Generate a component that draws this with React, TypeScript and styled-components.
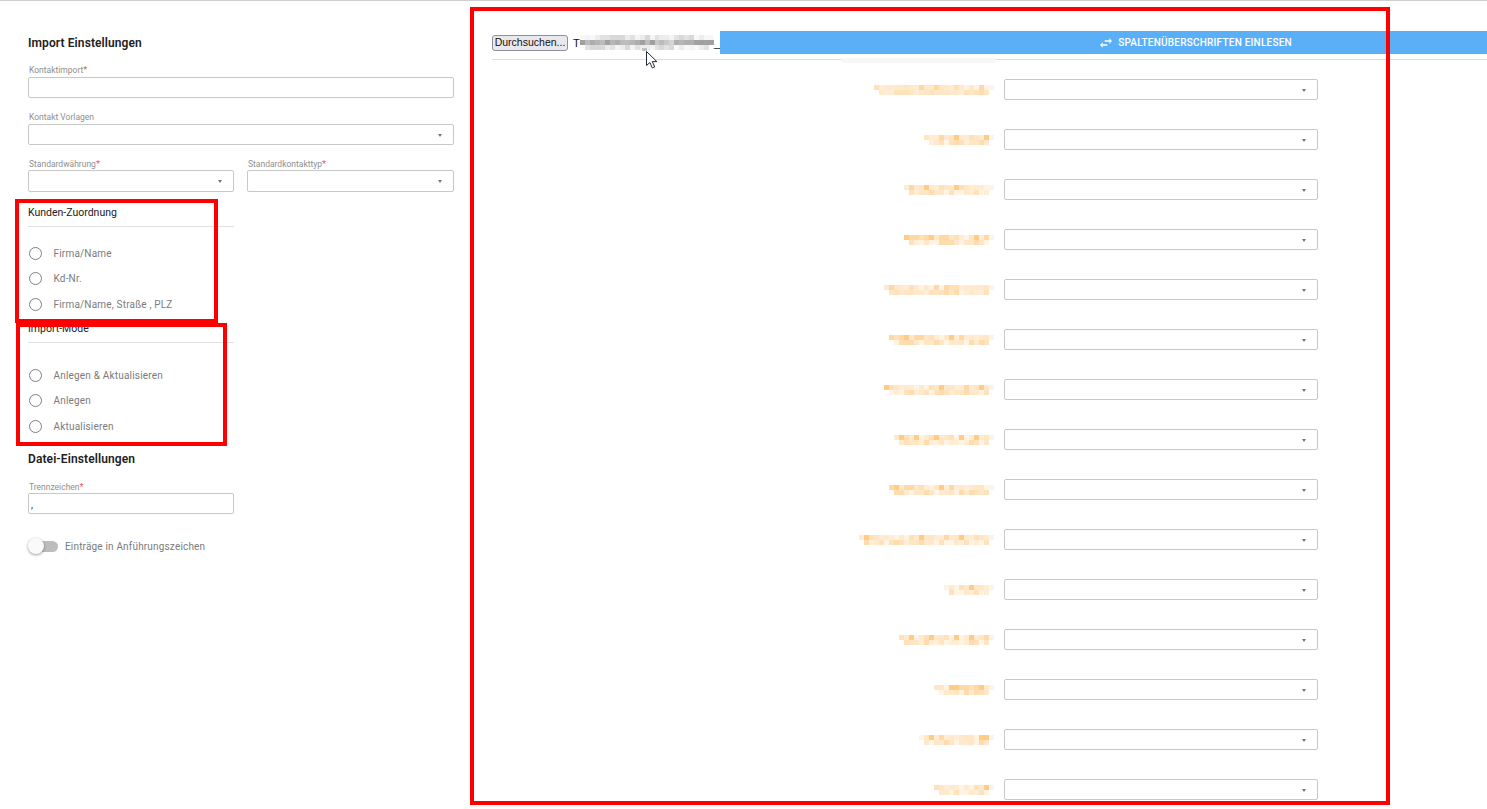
import React from "react";
import styled, { createGlobalStyle } from "styled-components";

const GlobalStyle = createGlobalStyle`
  html, body {
    margin: 0;
    height: 809px;
    overflow: hidden;
    background: #fff;
    font-family: Roboto, "Liberation Sans", sans-serif;
  }
`;

const mapped = [120, 70, 90, 90, 110, 105, 110, 100, 105, 135, 50, 95, 60, 75, 60];
const warmTop = ["#ffecd2", "#ffe6c4", "#ffe0b8", "#fff3e3", "#ffeacd", "#ffd8a6", "#ffe9cc", "#ffcb85"];
const warmLow = ["#ffe9cc", "#fff3e3", "#ffe2bc", "#ffdcae", "#ffedd6", "#ffe6c4"];
const greyPale = ["#f4f4f4", "#ececec", "#e2e2e2", "#f8f8f8", "#d8d8d8"];
const greyDark = ["#bcbcbc", "#aeaeae", "#c8c8c8", "#a0a0a0", "#d4d4d4", "#b6b6b6"];

// fake the pixelated text, same seed gives same cells, one palette per row
const Mosaic = ({ width, palettes, seed }: { width: number; palettes: string[][]; seed: number }) => {
  const cells = [];
  const cols = Math.round(width / 5);
  const rows = palettes.length;
  let n = seed * 7 + 3;
  for (let y = 0; y < rows; y++) {
    for (let x = 0; x < cols; x++) {
      n = (n * 31 + 11) % 101;
      const skip = y === rows - 1 && (x === 0 || x === cols - 1);
      if (!skip) {
        const palette = palettes[y];
        const fill = x === cols - 1 ? palette[3 % palette.length] : palette[n % palette.length];
        cells.push(<rect key={`${x}-${y}`} x={x * 5} y={y * 5} width={5} height={5} fill={fill} />);
      }
    }
  }
  return (
    <svg width={width} height={rows * 5} viewBox={`0 0 ${width} ${rows * 5}`} shapeRendering="crispEdges">
      {cells}
    </svg>
  );
};

const App = () => {
  return (
    <Page>
      <GlobalStyle />
      <Settings>
        <Heading>Import Einstellungen</Heading>
        <Field $top={14}>
          <Label>
            Kontaktimport<Req>*</Req>
          </Label>
          <Input $gap={1} />
        </Field>
        <Field $top={14}>
          <Label>Kontakt Vorlagen</Label>
          <Select />
        </Field>
        <HalfRow>
          <Field $top={13}>
            <Label>
              Standardwährung<Req>*</Req>
            </Label>
            <Select $tall />
          </Field>
          <Field $top={13}>
            <Label>
              Standardkontakttyp<Req>*</Req>
            </Label>
            <Select $tall />
          </Field>
        </HalfRow>
        <RadioGroup $top={14} $listTop={20} title="Kunden-Zuordnung" options={["Firma/Name", "Kd-Nr.", "Firma/Name, Straße , PLZ"]} />
        <RadioGroup $top={11} $listTop={26} title="Import-Mode" options={["Anlegen & Aktualisieren", "Anlegen", "Aktualisieren"]} />
        <Heading $top={19}>Datei-Einstellungen</Heading>
        <Field $top={15} $half>
          <Label>
            Trennzeichen<Req>*</Req>
          </Label>
          <Input>,</Input>
        </Field>
        <ToggleRow>
          <Track>
            <Thumb />
          </Track>
          <ToggleText>Einträge in Anführungszeichen</ToggleText>
        </ToggleRow>
      </Settings>

      <Mapping>
        <FileBar>
          <BrowseButton>Durchsuchen...</BrowseButton>
          <FileName>
            T
            <Mosaic width={135} palettes={[greyPale, greyDark, greyPale]} seed={4} />
            <span>_</span>
          </FileName>
          <ReadButton>
            <svg width="16" height="16" viewBox="0 0 24 24" fill="#fff">
              <path d="M6.99 11L3 15l3.99 4v-3H14v-2H6.99v-3zM21 9l-3.99-4v3H10v2h7.01v3L21 9z" />
            </svg>
            Spaltenüberschriften einlesen
          </ReadButton>
        </FileBar>
        <Rows>
          {mapped.map((width, i) => (
            <MapRow key={i}>
              <MapLabel>
                <Mosaic width={width} palettes={[warmTop, warmLow]} seed={i + 1} />
              </MapLabel>
              <Select $wide />
            </MapRow>
          ))}
        </Rows>
      </Mapping>

      <FaintPatch />
      <Marker $x={15} $y={199} $w={203} $h={124} />
      <Marker $x={16} $y={323} $w={211} $h={123} />
      <Marker $x={470} $y={7} $w={920} $h={798} />
      <CursorSmudge />
      <Cursor width="14" height="20" viewBox="0 0 14 20">
        <path d="M1.5 1.5v14l3.4-3 2.4 5.4 2.4-1-2.4-5.3h4.6z" fill="#fff" stroke="#1f2a36" strokeWidth="1" />
      </Cursor>
    </Page>
  );
};

const RadioGroup = ({ title, options, $top, $listTop }: { title: string; options: string[]; $top: number; $listTop: number }) => (
  <GroupBox $top={$top}>
    <GroupTitle>{title}</GroupTitle>
    <RadioList $top={$listTop}>
      {options.map((option) => (
        <RadioRow key={option}>
          <RadioCircle />
          {option}
        </RadioRow>
      ))}
    </RadioList>
  </GroupBox>
);

const Page = styled.div`
  position: relative;
  display: flex;
  align-items: flex-start;
  height: 808px;
  overflow: hidden;
  border-top: 1px solid #cfcfcf;
`;
const Settings = styled.div`
  flex: none;
  width: 426px;
  margin-left: 28px;
  padding-top: 35px;
`;
const Heading = styled.h2<{ $top?: number }>`
  margin: ${(p) => p.$top || 0}px 0 0;
  font-size: 12px;
  line-height: 14px;
  font-weight: 600;
  letter-spacing: 0.1px;
  color: #212121;
`;
const Field = styled.div<{ $top: number; $half?: boolean }>`
  margin-top: ${(p) => p.$top}px;
  width: ${(p) => (p.$half ? "206px" : "auto")};
`;
const Label = styled.div`
  height: 12px;
  padding-left: 1px;
  font-size: 8.5px;
  line-height: 11px;
  color: #8f8f8f;
`;
const Req = styled.span`
  color: #f55a4e;
  font-size: 9.5px;
`;
const Input = styled.div<{ $gap?: number }>`
  box-sizing: border-box;
  height: 21px;
  margin-top: ${(p) => p.$gap || 0}px;
  padding: 5px 2px 0;
  border: 1px solid #c8c8c8;
  border-radius: 2px;
  font-size: 10px;
  line-height: 12px;
  color: #333;
`;
const Select = styled.div<{ $wide?: boolean; $tall?: boolean }>`
  box-sizing: border-box;
  display: flex;
  align-items: center;
  justify-content: flex-end;
  width: ${(p) => (p.$wide ? "314px" : "auto")};
  height: ${(p) => (p.$tall ? "22px" : "21px")};
  padding-right: 11px;
  border: 1px solid #c8c8c8;
  border-radius: 2px;
  &::after {
    content: "";
    margin-top: 1px;
    border-left: 2.5px solid transparent;
    border-right: 2.5px solid transparent;
    border-top: 3px solid #757575;
  }
`;
const HalfRow = styled.div`
  display: grid;
  grid-template-columns: 206px 207px;
  column-gap: 13px;
`;
const GroupBox = styled.div<{ $top: number }>`
  width: 206px;
  margin-top: ${(p) => p.$top}px;
`;
const GroupTitle = styled.div`
  height: 20px;
  border-bottom: 1px solid #e0e0e0;
  font-size: 10.5px;
  line-height: 13px;
  color: #212121;
`;
const RadioList = styled.div<{ $top: number }>`
  display: flex;
  flex-direction: column;
  gap: 12px;
  padding-top: ${(p) => p.$top}px;
  & > :last-child {
    margin-top: 1px;
  }
`;
const RadioRow = styled.div`
  display: flex;
  align-items: center;
  gap: 11.5px;
  height: 13px;
  padding-left: 1px;
  font-size: 10px;
  letter-spacing: 0.19px;
  color: #7b7b7b;
`;
const RadioCircle = styled.span`
  flex: none;
  box-sizing: border-box;
  width: 13px;
  height: 13px;
  border: 1.3px solid #808080;
  border-radius: 50%;
`;
const ToggleRow = styled.div`
  display: flex;
  align-items: center;
  gap: 7px;
  margin-top: 23px;
  padding-left: 2px;
  height: 18px;
`;
const Track = styled.div`
  position: relative;
  width: 28px;
  height: 11px;
  border-radius: 6px;
  background: #bdbdbd;
`;
const Thumb = styled.span`
  position: absolute;
  left: -2px;
  top: -3px;
  width: 16px;
  height: 16px;
  border-radius: 50%;
  background: #fafafa;
  box-shadow: 0 1px 3px rgba(0, 0, 0, 0.4);
`;
const ToggleText = styled.span`
  font-size: 10px;
  letter-spacing: 0.17px;
  color: #7b7b7b;
`;
const Mapping = styled.div`
  flex: none;
  width: 995px;
  margin-left: 38px;
  padding-top: 30px;
`;
const FileBar = styled.div`
  display: flex;
  align-items: center;
  height: 28px;
  border-bottom: 1px solid #dedede;
  & > * {
    margin-bottom: 5px;
  }
`;
const BrowseButton = styled.button`
  flex: none;
  box-sizing: border-box;
  width: 76px;
  height: 16px;
  padding: 0;
  border: 1px solid #8f8f9d;
  border-radius: 3px;
  background: #e9e9ed;
  font-family: "Liberation Sans", Arial, sans-serif;
  font-size: 10.5px;
  line-height: 13px;
  color: #111;
`;
const FileName = styled.div`
  flex: none;
  display: flex;
  align-items: center;
  width: 147px;
  margin-left: 5px;
  font-family: "Liberation Sans", Arial, sans-serif;
  font-size: 11px;
  color: #111;
  overflow: hidden;
`;
const ReadButton = styled.div`
  flex: none;
  display: flex;
  align-items: center;
  justify-content: center;
  gap: 4px;
  width: 950px;
  height: 23px;
  background: #5aaff7;
  color: #fff;
  font-size: 10px;
  font-weight: 500;
  letter-spacing: 0.22px;
  text-transform: uppercase;
`;
const Rows = styled.div`
  display: flex;
  flex-direction: column;
  gap: 29px;
  padding-top: 19px;
`;
const MapRow = styled.div`
  display: flex;
  align-items: center;
  gap: 10px;
`;
const MapLabel = styled.div`
  display: flex;
  justify-content: flex-end;
  width: 502px;
`;
const FaintPatch = styled.div`
  position: absolute;
  left: 841px;
  top: 57px;
  width: 155px;
  height: 5px;
  background: #f7f7f7;
`;
const Marker = styled.div<{ $x: number; $y: number; $w: number; $h: number }>`
  position: absolute;
  box-sizing: border-box;
  left: ${(p) => p.$x}px;
  top: ${(p) => p.$y - 1}px;
  width: ${(p) => p.$w}px;
  height: ${(p) => p.$h}px;
  border: 4px solid #fe0000;
`;
const CursorSmudge = styled.div`
  position: absolute;
  left: 642px;
  top: 47px;
  width: 5px;
  height: 3px;
  background: #c4c4c4;
`;
const Cursor = styled.svg`
  position: absolute;
  left: 645px;
  top: 49px;
`;

export default App;
